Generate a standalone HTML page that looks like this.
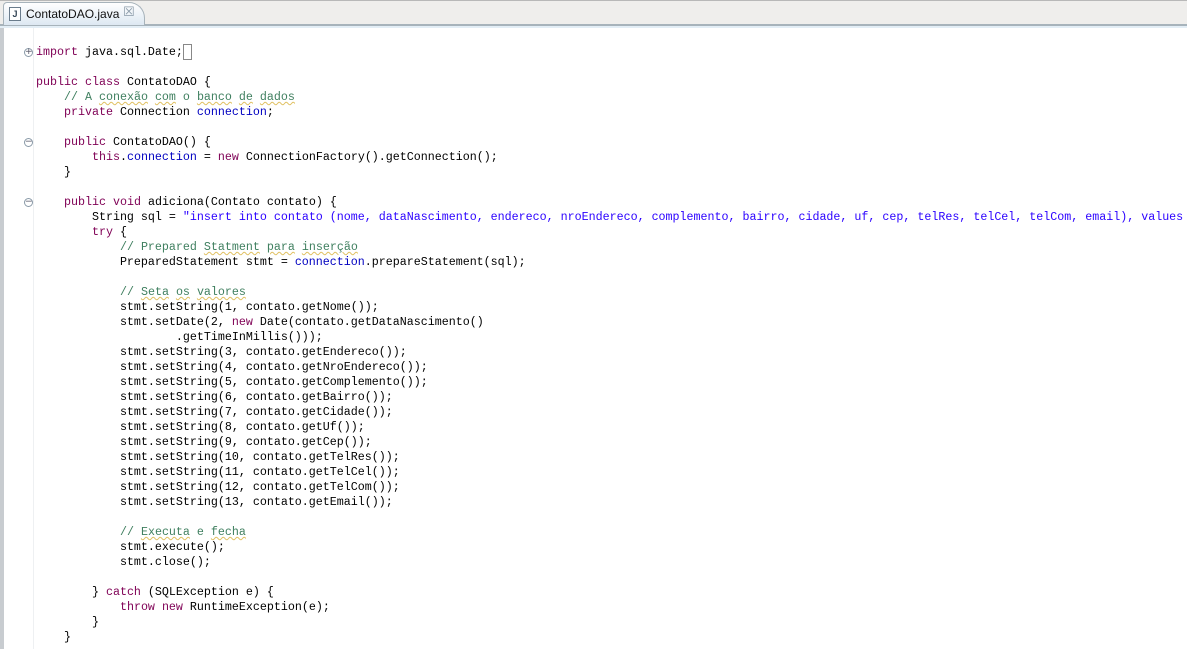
<!DOCTYPE html>
<html><head><meta charset="utf-8"><style>
body{margin:0;width:1187px;height:649px;overflow:hidden;background:#fff;position:relative;font-family:"Liberation Mono",monospace}
.bar{position:absolute;left:0;top:0;width:1187px;height:24px;background:#efeeec;border-top:1px solid #b8b8b8;box-sizing:border-box}
.bline{position:absolute;left:0;top:24px;width:1187px;height:2px;background:#a7b3bb}
.bline2{position:absolute;left:0;top:26px;width:1187px;height:2px;background:#e3eef6}
.tab{position:absolute;left:3px;top:2px;width:142px;height:23px;background:linear-gradient(#fff,#dde8f2);border:1px solid #a7b3bb;border-bottom:none;border-radius:4px 16px 0 0;box-sizing:border-box}
.tab .ic{position:absolute;left:5px;top:4px;width:10px;height:12px;border:1px solid #6a7c8c;background:#fff;font:bold 9px "Liberation Sans",sans-serif;color:#345;text-align:center;line-height:12px}
.tab .t{position:absolute;left:22px;top:4px;font:12px "Liberation Sans",sans-serif;color:#111}
.tab .x{position:absolute;left:119px;top:2px;font:13px "DejaVu Sans",sans-serif;color:#8a9aa8}
.lstrip{position:absolute;left:0;top:28px;width:4px;height:621px;background:#c8ccd0}
.vl{position:absolute;left:33px;top:28px;width:1px;height:621px;background:#eef0f2}
pre{position:absolute;left:36px;top:45px;margin:0;font-size:11.67px;line-height:15px;color:#000;font-family:"Liberation Mono",monospace}
.k{color:#7f0055}.f{color:#0000c0}.s{color:#2a00ff}.c{color:#3f7f5f}
.u{text-decoration:underline wavy #e0c060;text-decoration-thickness:1px}
.g{position:absolute;left:24px;width:9px;height:9px;border-radius:50%;border:1px solid #8a9aa8;box-sizing:border-box;font:9px/7px "DejaVu Sans",sans-serif;color:#556;text-align:center}
</style></head><body>
<div class="bar"></div><div class="bline"></div><div class="bline2"></div>
<div class="tab"><div class="ic">J</div><div class="t">ContatoDAO.java</div><div class="x">☒</div></div>
<div class="lstrip"></div><div class="vl"></div>
<div class="g" style="top:48px">+</div>
<div class="g" style="top:138px">−</div>
<div class="g" style="top:198px">−</div>
<pre><span class="k">import</span> java.sql.Date;<span style="border:1px solid #888">&nbsp;</span>

<span class="k">public</span> <span class="k">class</span> ContatoDAO {
    <span class="c">// A <span class="u">conexão</span> <span class="u">com</span> o <span class="u">banco</span> <span class="u">de</span> <span class="u">dados</span></span>
    <span class="k">private</span> Connection <span class="f">connection</span>;

    <span class="k">public</span> ContatoDAO() {
        <span class="k">this</span>.<span class="f">connection</span> = <span class="k">new</span> ConnectionFactory().getConnection();
    }

    <span class="k">public</span> <span class="k">void</span> adiciona(Contato contato) {
        String sql = <span class="s">"insert into contato (nome, dataNascimento, endereco, nroEndereco, complemento, bairro, cidade, uf, cep, telRes, telCel, telCom, email), values</span>
        <span class="k">try</span> {
            <span class="c">// Prepared <span class="u">Statment</span> <span class="u">para</span> <span class="u">inserção</span></span>
            PreparedStatement stmt = <span class="f">connection</span>.prepareStatement(sql);

            <span class="c">// <span class="u">Seta</span> <span class="u">os</span> <span class="u">valores</span></span>
            stmt.setString(1, contato.getNome());
            stmt.setDate(2, <span class="k">new</span> Date(contato.getDataNascimento()
                    .getTimeInMillis()));
            stmt.setString(3, contato.getEndereco());
            stmt.setString(4, contato.getNroEndereco());
            stmt.setString(5, contato.getComplemento());
            stmt.setString(6, contato.getBairro());
            stmt.setString(7, contato.getCidade());
            stmt.setString(8, contato.getUf());
            stmt.setString(9, contato.getCep());
            stmt.setString(10, contato.getTelRes());
            stmt.setString(11, contato.getTelCel());
            stmt.setString(12, contato.getTelCom());
            stmt.setString(13, contato.getEmail());

            <span class="c">// <span class="u">Executa</span> e <span class="u">fecha</span></span>
            stmt.execute();
            stmt.close();

        } <span class="k">catch</span> (SQLException e) {
            <span class="k">throw</span> <span class="k">new</span> RuntimeException(e);
        }
    }</pre>
</body></html>
